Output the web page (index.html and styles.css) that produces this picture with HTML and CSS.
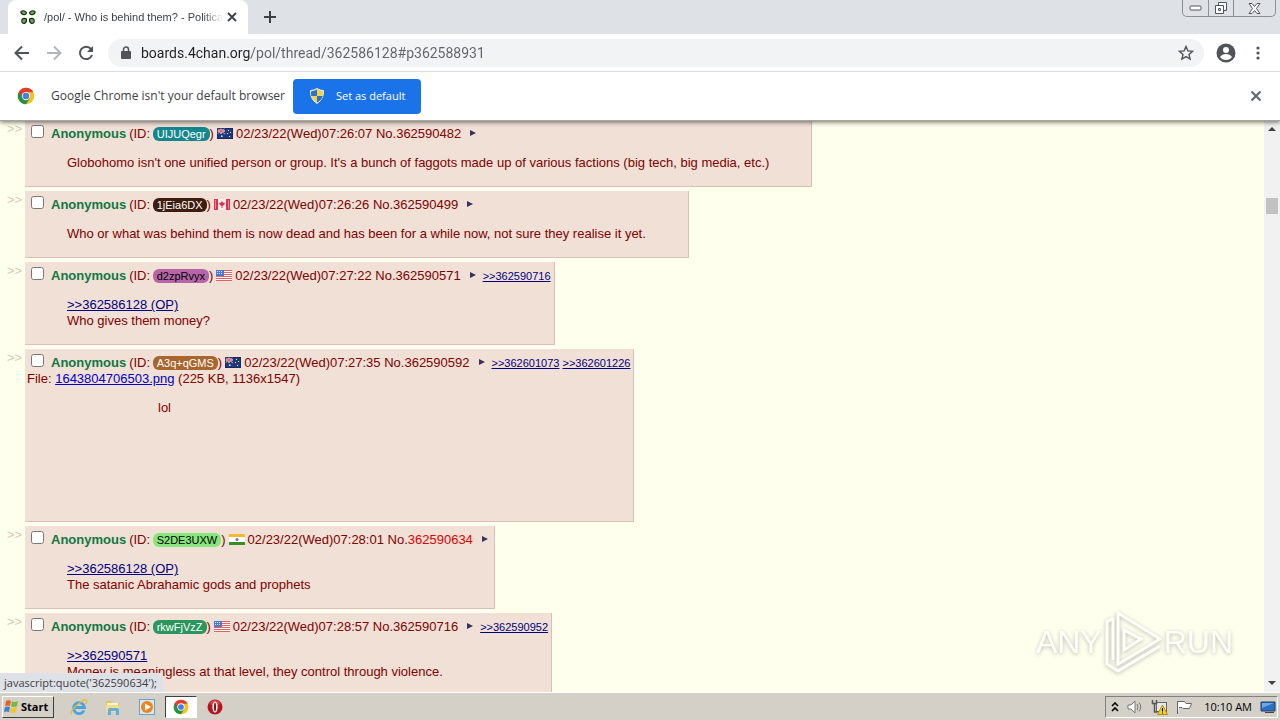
FILE: index.html
```html
<!DOCTYPE html>
<html lang="en">
<head>
    <meta charset="UTF-8">
    <title>/pol/ - Who is behind them? - Politically Incorrect</title>
    <link rel="stylesheet" href="styles.css">
</head>
<body>
<svg class="defs" aria-hidden="true">
    <symbol id="flag-au" viewBox="0 0 16 11">
        <rect width="16" height="11" fill="#1f3a7c"/>
        <path d="M0 0L8 6M8 0L0 6" stroke="#b8c4e4" stroke-width="1"/>
        <path d="M4 0V6M0 3H8" stroke="#dde" stroke-width="2"/>
        <path d="M4 0V6M0 3H8" stroke="#d8455a" stroke-width="1"/>
        <path d="M4 7.500h1.500v1.500H4zM11 2h1v1h-1zM13 4h1v1h-1zM10 5h1v1h-1zM12 8h1v1h-1z" fill="#fff"/>
        <rect x=".5" y=".5" width="15" height="10" fill="none" stroke="#102050" opacity=".6"/>
    </symbol>
    <symbol id="flag-ca" viewBox="0 0 16 11">
        <rect width="16" height="11" fill="#fbeeee"/>
        <path d="M0 0h4v11H0zM12 0h4v11h-4z" fill="#e0304a"/>
        <path d="M8 2l1 1.500 2 .5-1 2-1.500 1V9h-1V7L6 6 5 4l2-.5z" fill="#e0304a"/>
        <path d="M1.500 1v9M14.500 1v9" stroke="#f58a98"/>
    </symbol>
    <symbol id="flag-us" viewBox="0 0 16 11">
        <rect width="16" height="11" fill="#fff"/>
        <path d="M0 .5h16M0 2.500h16M0 4.500h16M0 6.500h16M0 8.500h16M0 10.500h16" stroke="#e2605e"/>
        <rect width="8" height="6" fill="#4a78cc"/>
        <path d="M1 1.500h6M1 3.500h6" stroke="#dce8ff" stroke-dasharray="1 1"/>
    </symbol>
    <symbol id="flag-in" viewBox="0 0 16 11">
        <rect width="16" height="11" fill="#fff"/>
        <rect width="16" height="3" fill="#f5b830"/>
        <rect y="8" width="16" height="3" fill="#3c8c28"/>
        <circle cx="8" cy="5.500" r="1.500" fill="#6b74c4"/>
    </symbol>
    <symbol id="chrome" viewBox="0 0 24 24">
        <circle cx="12" cy="12" r="11" fill="#fbc116"/>
        <path d="M12 12L2.500 6.500A11 11 0 0 0 12 23l5-8z" fill="#229342"/>
        <path d="M12 7H21.800A11 11 0 0 0 2.500 6.500L7.500 15z" fill="#e33b2e"/>
        <circle cx="12" cy="12" r="5.500" fill="#fff"/>
        <circle cx="12" cy="12" r="4.300" fill="#3f7fe8"/>
    </symbol>
</svg>

<header class="browser">
    <div class="tab-strip">
        <div class="tab">
            <svg class="favicon" width="16" height="16" viewBox="0 0 16 16">
                <g fill="#6fa860" stroke="#15250f" stroke-width="1.100">
                    <path d="M1 2.500Q4 .5 6.500 3.500 6.500 6 3 5.500 .5 4.500 1 2.500zM15 2.500Q12 .5 9.500 3.500 9.500 6 13 5.500 15.500 4.500 15 2.500z"/>
                    <path d="M2 10.500Q4 8.500 6.500 10 7 13 4.500 14.500 1 14.500 2 10.500zM14 10.500Q12 8.500 9.500 10 9 13 11.500 14.500 15 14.500 14 10.500z"/>
                </g>
            </svg>
            <span class="tab-title">/pol/ - Who is behind them? - Politica</span>
            <button class="icon-button" aria-label="Close tab">
                <svg width="10" height="10" viewBox="0 0 10 10"><path d="M1 1l8 8M9 1L1 9" stroke="#3c4043" stroke-width="1.800"/></svg>
            </button>
        </div>
        <button class="icon-button new-tab" aria-label="New tab">
            <svg width="12" height="12" viewBox="0 0 12 12"><path d="M6 0v12M0 6h12" stroke="#3c4043" stroke-width="2"/></svg>
        </button>
        <div class="window-buttons">
            <button aria-label="Minimize"><svg width="13" height="6" viewBox="0 0 13 6"><rect x="1" y="1" width="11" height="4" rx="1" fill="#fff" stroke="#50545c"/></svg></button>
            <button aria-label="Restore"><svg width="14" height="13" viewBox="0 0 14 13"><path d="M4.500 .5h8v8h-8z" fill="#fff" stroke="#50545c"/><path d="M1.500 3.500h8v8h-8zM4.500 6.500h2v2h-2z" fill="#fff" stroke="#50545c"/></svg></button>
            <button aria-label="Close"><svg width="13" height="11" viewBox="0 0 13 11"><path d="M1 .5h3l2.500 3 2.500-3h3L8.500 5.500l3.500 5H9l-2.500-3-2.500 3H1l3.500-5z" fill="#fff" stroke="#50545c"/></svg></button>
        </div>
    </div>
    <div class="toolbar">
        <button class="icon-button" aria-label="Back">
            <svg width="16" height="16" viewBox="0 0 16 16" fill="none" stroke="#505357" stroke-width="2"><path d="M15 8H2M8 1.500L1.500 8 8 14.500"/></svg>
        </button>
        <button class="icon-button" aria-label="Forward">
            <svg width="16" height="16" viewBox="0 0 16 16" fill="none" stroke="#b4b6b9" stroke-width="2"><path d="M1 8h13M8 1.500L14.500 8 8 14.500"/></svg>
        </button>
        <button class="icon-button" aria-label="Reload">
            <svg width="16" height="16" viewBox="0 0 16 16"><path d="M13 4A6.200 6.200 0 1 0 14 10" fill="none" stroke="#505357" stroke-width="2"/><path d="M15 1v6H9z" fill="#505357"/></svg>
        </button>
        <div class="omnibox">
            <svg width="10" height="13" viewBox="0 0 10 13"><rect y="5" width="10" height="8" rx="1" fill="#505357"/><path d="M2.500 6V3.500a2.500 2.500 0 0 1 5 0V6" fill="none" stroke="#505357" stroke-width="1.500"/></svg>
            <input type="text" aria-label="Address" value="boards.4chan.org/pol/thread/362586128#p362588931">
            <button class="icon-button" aria-label="Bookmark">
                <svg width="16" height="16" viewBox="0 0 16 16"><path d="M8 1.500l1.900 4.400 4.700.4-3.600 3.100 1.100 4.700L8 11.600l-4.100 2.500L5 9.400 1.400 6.300l4.700-.4z" fill="none" stroke="#505357" stroke-width="1.400"/></svg>
            </button>
        </div>
        <button class="icon-button" aria-label="Profile">
            <svg width="20" height="20" viewBox="0 0 20 20"><circle cx="10" cy="10" r="9.500" fill="#505357"/><circle cx="10" cy="7" r="3" fill="#fff"/><path d="M4 14q2-3 6-3t6 3q-2 3-6 3t-6-3z" fill="#fff"/></svg>
        </button>
        <button class="icon-button" aria-label="Menu">
            <svg width="4" height="14" viewBox="0 0 4 14" fill="#505357"><circle cx="2" cy="2" r="1.600"/><circle cx="2" cy="7" r="1.600"/><circle cx="2" cy="12" r="1.600"/></svg>
        </button>
    </div>
    <div class="infobar">
        <svg width="18" height="18"><use href="#chrome"/></svg>
        <span class="infobar-text">Google Chrome isn't your default browser</span>
        <button class="set-default">
            <svg width="16" height="16" viewBox="0 0 16 16">
                <path d="M8 .5Q11 2.500 14.500 2.500 15 11 8 15.500 1 11 1.500 2.500 5 2.500 8 .5z" fill="#f4d34c" stroke="#e8eef8"/>
                <path d="M8 1.500V8H2.200Q1.800 5 2.200 3.200 5 3.300 8 1.500zM8 8h5.800Q12.500 12 8 14.500z" fill="#2b72c8"/>
            </svg>
            Set as default
        </button>
        <button class="icon-button" aria-label="Dismiss">
            <svg width="10" height="10" viewBox="0 0 10 10"><path d="M.5 .5l9 9M9.500 .5l-9 9" stroke="#5f6368" stroke-width="2"/></svg>
        </button>
    </div>
</header>

<div class="viewport">
    <main class="thread">
        <div class="post-container">
            <span class="side-arrows">&gt;&gt;</span>
            <article class="post">
                <div class="post-info">
                    <input type="checkbox" aria-label="Select post 362590482">
                    <span class="name">Anonymous</span>
                    <span class="uid">(ID: <span class="hand id-teal">UIJUQegr</span>)</span>
                    <svg class="flag"><use href="#flag-au"/></svg>
                    <span class="date">02/23/22(Wed)07:26:07 <a href="#p362590482">No.</a><a href="#q362590482">362590482</a></span>
                    <a class="menu" href="#menu" aria-label="Post menu"></a>
                </div>
                <blockquote>Globohomo isn't one unified person or group. It's a bunch of faggots made up of various factions (big tech, big media, etc.)</blockquote>
            </article>
        </div>
        <div class="post-container">
            <span class="side-arrows">&gt;&gt;</span>
            <article class="post">
                <div class="post-info">
                    <input type="checkbox" aria-label="Select post 362590499">
                    <span class="name">Anonymous</span>
                    <span class="uid">(ID: <span class="hand id-brown">1jEia6DX</span>)</span>
                    <svg class="flag"><use href="#flag-ca"/></svg>
                    <span class="date">02/23/22(Wed)07:26:26 <a href="#p362590499">No.</a><a href="#q362590499">362590499</a></span>
                    <a class="menu" href="#menu" aria-label="Post menu"></a>
                </div>
                <blockquote>Who or what was behind them is now dead and has been for a while now, not sure they realise it yet.</blockquote>
            </article>
        </div>
        <div class="post-container">
            <span class="side-arrows">&gt;&gt;</span>
            <article class="post">
                <div class="post-info">
                    <input type="checkbox" aria-label="Select post 362590571">
                    <span class="name">Anonymous</span>
                    <span class="uid">(ID: <span class="hand id-purple">d2zpRvyx</span>)</span>
                    <svg class="flag"><use href="#flag-us"/></svg>
                    <span class="date">02/23/22(Wed)07:27:22 <a href="#p362590571">No.</a><a href="#q362590571">362590571</a></span>
                    <a class="menu" href="#menu" aria-label="Post menu"></a>
                    <span class="backlinks"><a href="#p362590716">&gt;&gt;362590716</a></span>
                </div>
                <blockquote><a class="quotelink" href="#p362586128">&gt;&gt;362586128 (OP)</a><br>Who gives them money?</blockquote>
            </article>
        </div>
        <div class="post-container">
            <span class="side-arrows">&gt;&gt;</span>
            <article class="post">
                <div class="post-info">
                    <input type="checkbox" aria-label="Select post 362590592">
                    <span class="name">Anonymous</span>
                    <span class="uid">(ID: <span class="hand id-ochre">A3q+qGMS</span>)</span>
                    <svg class="flag"><use href="#flag-au"/></svg>
                    <span class="date">02/23/22(Wed)07:27:35 <a href="#p362590592">No.</a><a href="#q362590592">362590592</a></span>
                    <a class="menu" href="#menu" aria-label="Post menu"></a>
                    <span class="backlinks"><a href="#p362601073">&gt;&gt;362601073</a> <a href="#p362601226">&gt;&gt;362601226</a></span>
                </div>
                <div class="file-text">File: <a href="#file">1643804706503.png</a> (225 KB, 1136x1547)</div>
                <div class="file-body">
                    <div class="thumb"></div>
                    <blockquote>lol</blockquote>
                </div>
            </article>
        </div>
        <div class="post-container">
            <span class="side-arrows">&gt;&gt;</span>
            <article class="post">
                <div class="post-info">
                    <input type="checkbox" aria-label="Select post 362590634">
                    <span class="name">Anonymous</span>
                    <span class="uid">(ID: <span class="hand id-lime">S2DE3UXW</span>)</span>
                    <svg class="flag"><use href="#flag-in"/></svg>
                    <span class="date">02/23/22(Wed)07:28:01 <a href="#p362590634">No.</a><a class="hovered" href="#q362590634">362590634</a></span>
                    <a class="menu" href="#menu" aria-label="Post menu"></a>
                </div>
                <blockquote><a class="quotelink" href="#p362586128">&gt;&gt;362586128 (OP)</a><br>The satanic Abrahamic gods and prophets</blockquote>
            </article>
        </div>
        <div class="post-container">
            <span class="side-arrows">&gt;&gt;</span>
            <article class="post">
                <div class="post-info">
                    <input type="checkbox" aria-label="Select post 362590716">
                    <span class="name">Anonymous</span>
                    <span class="uid">(ID: <span class="hand id-green">rkwFjVzZ</span>)</span>
                    <svg class="flag"><use href="#flag-us"/></svg>
                    <span class="date">02/23/22(Wed)07:28:57 <a href="#p362590716">No.</a><a href="#q362590716">362590716</a></span>
                    <a class="menu" href="#menu" aria-label="Post menu"></a>
                    <span class="backlinks"><a href="#p362590952">&gt;&gt;362590952</a></span>
                </div>
                <blockquote><a class="quotelink" href="#p362590571">&gt;&gt;362590571</a><br>Money is meaningless at that level, they control through violence.</blockquote>
            </article>
        </div>
    </main>
    <div class="scrollbar">
        <svg width="8" height="4" viewBox="0 0 8 4"><path d="M0 4l4-4 4 4z" fill="#404040"/></svg>
        <div class="scroll-thumb"></div>
        <svg width="8" height="4" viewBox="0 0 8 4"><path d="M0 0h8L4 4z" fill="#404040"/></svg>
    </div>
    <div class="status">javascript:quote('362590634');</div>
    <div class="watermark">
        <span>ANY</span>
        <svg width="58" height="64" viewBox="0 0 58 64" fill="none" stroke="#fff" stroke-width="3">
            <path d="M14 3L56 29 14 54z"/>
            <path d="M20 20L37 29 20 40z"/>
            <path d="M9 8L3 12V54L14 61 56 36"/>
            <path d="M9 8V50"/>
        </svg>
        <span>RUN</span>
    </div>
</div>

<footer class="taskbar">
    <button class="start">
        <svg width="16" height="16" viewBox="0 0 16 16">
            <path d="M3 2q2-1.500 5 0L7 7Q4.500 6 2 7z" fill="#e8602c"/>
            <path d="M9 2.500q3 1 6-.5l-1 5q-3 1.500-6 .5z" fill="#7ab83c"/>
            <path d="M2 8q2.500-1 5 0l-1 5Q4 12 1 13z" fill="#3c82d4"/>
            <path d="M8 8.500q3 1 6-.5l-1 5q-3 1.500-6 .5z" fill="#f6c42c"/>
        </svg>
        Start
    </button>
    <button class="task" aria-label="Internet Explorer">
        <svg width="18" height="18" viewBox="0 0 18 18"><path d="M14 12.500A5.500 5.500 0 1 1 14.500 9.500H5" fill="none" stroke="#45a5e0" stroke-width="2.800"/><path d="M2 16.500Q-1 14 7 7T16.500 2.500Q17.500 4 15.500 6" fill="none" stroke="#e8b83c" stroke-width="1.300"/></svg>
    </button>
    <button class="task" aria-label="Explorer">
        <svg width="18" height="18" viewBox="0 0 18 18"><path d="M2 3h5l1 2h7v9H2z" fill="#e6c25c"/><path d="M3 5h11v3H3z" fill="#fff6c8"/><path d="M2 7h13v7H2z" fill="#f4dc88"/><path d="M4 17v-5q0-2 2-2h7q2 0 2 2v5h-3v-4H7v4z" fill="#5eaede"/></svg>
    </button>
    <button class="task" aria-label="Media Player">
        <svg width="18" height="18" viewBox="0 0 18 18"><rect x="1.500" y="1.500" width="15" height="15" fill="#d4e8f6" stroke="#6ba2cc"/><circle cx="9" cy="9" r="6" fill="#f08418"/><path d="M7 5.500v7L13 9z" fill="#fff"/></svg>
    </button>
    <button class="task active" aria-label="Chrome">
        <svg width="16" height="16"><use href="#chrome"/></svg>
    </button>
    <button class="task" aria-label="Opera">
        <svg width="18" height="18" viewBox="0 0 18 18"><circle cx="9" cy="9" r="7.500" fill="#b8141c"/><ellipse cx="9" cy="5" rx="5" ry="3" fill="#d84048"/><ellipse cx="9" cy="9" rx="2.600" ry="5.500" fill="#fff"/><ellipse cx="9" cy="9" rx="1" ry="4.500" fill="#7c1018"/></svg>
    </button>
    <div class="tray">
        <svg width="8" height="10" viewBox="0 0 8 10"><path d="M1 4l3-3 3 3M1 9l3-3 3 3" fill="none" stroke="#000" stroke-width="1.600"/></svg>
        <svg width="16" height="14" viewBox="0 0 16 14"><path d="M1 5h3l4-4v12L4 9H1z" fill="#fff" stroke="#777"/><path d="M10 4q2 3 0 6M12 2.500q3.500 4.500 0 9" fill="none" stroke="#777"/></svg>
        <svg width="17" height="16" viewBox="0 0 17 16"><rect x="5.500" y="3.500" width="10" height="9" fill="#e8e8e8" stroke="#666"/><path d="M1.500 1v3.500h4V1M3.500 5v8h3" fill="none" stroke="#555" stroke-width="1.500"/><path d="M11.500 6l5 9.500h-10z" fill="#f8d020" stroke="#b09010"/><path d="M11.500 9v3.500M11.500 13.500v1" stroke="#000"/></svg>
        <svg width="17" height="14" viewBox="0 0 17 14"><path d="M1.500 14V1.500h7l1.500 2h5.500l-2 5H7l-1-1H3" fill="#fff" stroke="#666"/></svg>
        <time>10:10 AM</time>
        <svg width="16" height="14" viewBox="0 0 16 14"><path d="M1 2h14v9H1z" fill="#2f6fc0" stroke="#1c3c6c"/><path d="M2 3h12L2 8z" fill="#6ca8e8"/><path d="M5 12.500h9" stroke="#445"/></svg>
    </div>
</footer>
</body>
</html>
```
FILE: styles.css
```css
* {
    box-sizing: border-box;
}

body {
    margin: 0;
    height: 100vh;
    display: flex;
    flex-flow: column nowrap;
    overflow: hidden;
    background-color: #ffffee;
    color: #800000;
    font-family: "Liberation Sans", Arial, sans-serif;
    font-size: 13px;
    line-height: 16px;
}

button {
    padding: 0;
    border: none;
    background: none;
    font: inherit;
}

svg {
    flex: none;
}

.defs {
    position: absolute;
    width: 0;
    height: 0;
}

/* browser chrome */

.browser {
    flex: none;
    position: relative;
    z-index: 2;
    background-color: #fff;
    color: #3c4043;
    font-family: "Open Sans", Tahoma, sans-serif;
    box-shadow: 0 1px 5px rgba(0, 0, 0, 0.6);
    border-bottom: 1px solid #a8a4a0;
}

.icon-button {
    display: flex;
    flex: none;
    align-items: center;
    justify-content: center;
}

.tab-strip {
    display: flex;
    height: 34px;
    padding-left: 8px;
    background-color: #dee1e6;
}

.tab {
    display: flex;
    align-items: center;
    width: 240px;
    padding: 0 11px 0 12px;
    border-radius: 8px 8px 0 0;
    background-color: #fff;
    font-family: "Liberation Sans", Tahoma, sans-serif;
    font-size: 11px;
}

.tab-title {
    flex: 1 1 auto;
    margin: 0 4px 0 8px;
    overflow: hidden;
    white-space: nowrap;
    mask-image: linear-gradient(to left, transparent, #000 20px);
}

.new-tab {
    width: 44px;
}

.window-buttons {
    display: flex;
    height: 17px;
    margin: 0 4px 0 auto;
    border: 1px solid #8b9099;
    border-top: none;
    border-radius: 0 0 5px 5px;
}

.window-buttons button {
    display: flex;
    align-items: center;
    justify-content: center;
    width: 25px;
}

.window-buttons button + button {
    border-left: 1px solid #8b9099;
}

.window-buttons button:last-child {
    width: 42px;
}

.toolbar {
    display: flex;
    align-items: center;
    gap: 16px;
    height: 38px;
    padding: 0 20px 0 14px;
    border-bottom: 1px solid #dadce0;
}

.omnibox {
    display: flex;
    flex: 1 1 auto;
    align-items: center;
    height: 28px;
    margin: 0 -4px 0 -2px;
    padding: 0 10px 0 13px;
    border-radius: 14px;
    background-color: #f1f3f4;
}

.omnibox input {
    flex: 1 1 auto;
    padding: 0 10px;
    border: none;
    /* host dark, path grey */
    background: linear-gradient(to right, #202124 120px, #5f6368 120px);
    background-clip: text;
    color: #3c4043;
    -webkit-text-fill-color: transparent;
    font-family: Roboto, Tahoma, sans-serif;
    font-size: 14px;
}

.toolbar > :last-child {
    margin-left: 4px;
}

.infobar {
    display: flex;
    align-items: center;
    height: 48px;
    padding: 0 19px 0 17px;
    font-size: 12px;
}

.infobar-text {
    margin: 0 8px 0 16px;
}

.set-default {
    display: flex;
    align-items: center;
    gap: 11px;
    height: 35px;
    margin-right: auto;
    padding: 0 16px;
    border-radius: 4px;
    background-color: #1a73e8;
    color: #fff;
    font-size: 11px;
}

/* thread */

.viewport {
    position: relative;
    display: flex;
    flex: 1 1 0;
    min-height: 0;
    margin-top: -1px;
    overflow: hidden;
}

.thread {
    flex: 1 1 auto;
    font-size: 13px;
}

.post-container {
    display: flex;
    align-items: flex-start;
    margin-bottom: 4px;
    padding-left: 7px;
}

.side-arrows {
    width: 18px;
    padding-top: 1px;
    color: #d9c9b7;
}

.post {
    padding: 3px 2px 2px;
    border: 1px solid #d9bfb7;
    border-top: none;
    border-left: none;
    background-color: #f0e0d6;
}

.post-info {
    display: flex;
    align-items: center;
    height: 19px;
    padding: 2px 1px 0 4px;
    white-space: nowrap;
}

.post-info input {
    width: 13px;
    height: 13px;
    margin: 0 7px 5px 0;
}

.name {
    margin-right: 3px;
    color: #117743;
    font-weight: 700;
}

.hand {
    display: inline-block;
    margin-left: -1px;
    padding: 0 4px;
    border-radius: 6px;
    font-size: 11px;
    line-height: 14px;
}

.id-teal {
    background-color: #14868e;
    color: #fff;
}

.id-brown {
    background-color: #3e1c0e;
    color: #fff;
}

.id-purple {
    background-color: #b666a8;
    color: #000;
}

.id-ochre {
    background-color: #a8662e;
    color: #fff;
}

.id-lime {
    background-color: #86e67c;
    color: #000;
}

.id-green {
    background-color: #2a965c;
    color: #fff;
}

.flag {
    width: 16px;
    height: 11px;
    margin: 0 3px;
}

.date a {
    color: inherit;
    text-decoration: none;
}

.date .hovered {
    color: #dd0000;
}

.menu {
    margin: 0 3px 2px 9px;
    border: 3px solid transparent;
    border-left: 6px solid #34345c;
    border-right: none;
}

.backlinks {
    margin-left: 4px;
    font-size: 11px;
}

.backlinks a,
.quotelink {
    color: #000080;
}

.file-text a {
    color: #0000cc;
}

.file-body {
    display: flex;
}

.thumb {
    width: 91px;
    height: 132px;
}

blockquote {
    margin: 13px 40px;
}

.scrollbar {
    display: flex;
    flex: none;
    flex-flow: column nowrap;
    align-items: center;
    width: 16px;
    padding: 7px 0;
    background-color: #f1f1f1;
}

.scroll-thumb {
    width: 12px;
    height: 16px;
    margin: 67px 0 auto;
    background-color: #c1c1c1;
}

.status {
    position: absolute;
    left: 0;
    bottom: 0;
    height: 19px;
    padding: 2px 6px 0 4px;
    border-top-right-radius: 3px;
    background-color: #dee1e6;
    color: #3c4043;
    font-family: "Open Sans", Tahoma, sans-serif;
    font-size: 11px;
}

.watermark {
    position: absolute;
    right: 47px;
    bottom: 18px;
    display: flex;
    align-items: center;
    gap: 2px;
    color: #fff;
    font-size: 32px;
    line-height: 64px;
    opacity: 0.8;
    filter: drop-shadow(0 1px 2px rgba(0, 0, 0, 0.35));
}

/* taskbar */

.taskbar {
    display: flex;
    flex: none;
    align-items: center;
    height: 28px;
    padding: 1px 2px 0;
    border-top: 1px solid #fff;
    background-color: #d4d0c8;
    color: #000;
    font-family: "Open Sans", Tahoma, sans-serif;
    font-size: 11px;
}

.start {
    display: flex;
    align-items: center;
    gap: 2px;
    width: 52px;
    height: 22px;
    margin-right: 9px;
    border: 1px solid;
    border-color: #fff #404040 #404040 #fff;
    font-weight: 700;
}

.task {
    display: flex;
    align-items: center;
    justify-content: center;
    width: 32px;
    height: 22px;
    margin-right: 2px;
}

.task.active {
    border: 1px solid;
    border-color: #404040 #fff #fff #404040;
    background-color: #fff;
}

.tray {
    display: flex;
    align-items: center;
    gap: 8px;
    height: 22px;
    margin-left: auto;
    padding: 0 1px 0 5px;
    border: 1px solid;
    border-color: #808080 #fff #fff #808080;
}

.tray time {
    margin-left: 3px;
}
```
